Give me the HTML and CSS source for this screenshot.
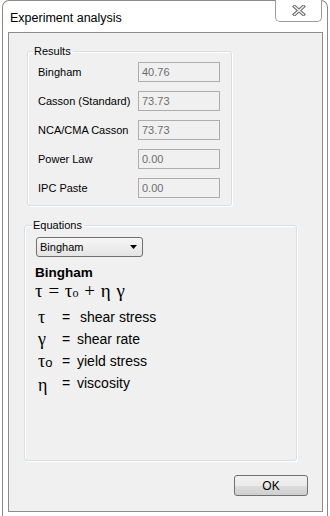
FILE: index.html
```html
<!DOCTYPE html>
<html lang="en">
<head>
    <meta charset="UTF-8">
    <meta name="viewport" content="width=device-width, initial-scale=1.0">
    <title>Experiment analysis</title>
    <link rel="stylesheet" href="styles.css">
</head>
<body>
    <div class="window">
        <div class="titlebar">
            <span class="title">Experiment analysis</span>
            <button class="close-btn" type="button" aria-label="Close">
                <svg width="14" height="11" viewBox="0 0 14 11">
                    <path d="M2.5 1.5 L11.5 9.5 M11.5 1.5 L2.5 9.5" stroke="#6b6b6b" stroke-width="3.4" stroke-linecap="square"/>
                    <path d="M2.5 1.5 L11.5 9.5 M11.5 1.5 L2.5 9.5" stroke="#f4f4f4" stroke-width="1.4" stroke-linecap="square"/>
                </svg>
            </button>
        </div>

        <div class="client">
            <fieldset class="group results">
                <legend>Results</legend>
                <div class="result-grid">
                    <label>Bingham</label>
                    <input type="text" value="40.76" readonly>
                    <label>Casson (Standard)</label>
                    <input type="text" value="73.73" readonly>
                    <label>NCA/CMA Casson</label>
                    <input type="text" value="73.73" readonly>
                    <label>Power Law</label>
                    <input type="text" value="0.00" readonly>
                    <label>IPC Paste</label>
                    <input type="text" value="0.00" readonly>
                </div>
            </fieldset>

            <fieldset class="group equations">
                <legend>Equations</legend>
                <div class="combo">
                    <span>Bingham</span>
                    <svg width="8" height="5" viewBox="0 0 8 5"><path d="M0 0 H7 L3.5 4 Z" fill="#000"/></svg>
                </div>
                <div class="eq-name">Bingham</div>
                <div class="formula">τ = τ<sub>o</sub> + η γ</div>
                <div class="defs">
                    <span class="sym">τ</span><span class="eq">=</span><span class="desc first">shear stress</span>
                    <span class="sym">γ</span><span class="eq">=</span><span class="desc">shear rate</span>
                    <span class="sym">τ<small>o</small></span><span class="eq">=</span><span class="desc">yield stress</span>
                    <span class="sym low">η</span><span class="eq">=</span><span class="desc">viscosity</span>
                </div>
            </fieldset>

            <button class="ok-btn" type="button">OK</button>
        </div>
    </div>
</body>
</html>
```

FILE: styles.css
```css
* {
    margin: 0;
    padding: 0;
    box-sizing: border-box;
}

body {
    font-family: 'Liberation Sans', Arial, sans-serif;
    background: #fff;
    width: 330px;
    height: 516px;
    overflow: hidden;
}

.window {
    width: 326px;
    height: 516px;
    margin-left: 2px;
    background: #fff;
    border: 1px solid #8a8a8a;
    border-bottom: none;
    border-radius: 7px 7px 0 0;
    padding: 0 4px 0 5px;
}

.titlebar {
    height: 31px;
    display: flex;
    justify-content: space-between;
    align-items: flex-start;
}

.title {
    font-size: 12.5px;
    color: #000;
    margin: 10px 0 0 2px;
}

.close-btn {
    width: 47px;
    height: 22px;
    margin: -1px 1px 0 0;
    background: #fff;
    border: 1px solid #9a9a9a;
    border-top: none;
    border-radius: 0 0 5px 5px;
    display: flex;
    align-items: center;
    justify-content: center;
}

.client {
    height: 480px;
    background: #f0f0f0;
    border: 1px solid #8d8d8d;
    display: flex;
    flex-direction: column;
}

.group {
    border: 1px solid #d5dfe5;
    border-radius: 3px;
    box-shadow: inset 1px 1px 0 #fff, 1px 1px 0 #fff;
}

.group legend {
    font-size: 11px;
    line-height: 14px;
    padding: 0 2px 0 1px;
    color: #000;
}

.results {
    width: 205px;
    margin: 11px 0 0 18px;
    padding: 4px 10px 7px 10px;
}

.results legend {
    margin-left: -5px;
}

.result-grid {
    display: grid;
    grid-template-columns: 100px 82px;
    row-gap: 9px;
    align-items: center;
}

.result-grid label {
    font-size: 11px;
    color: #000;
}

.result-grid input {
    width: 82px;
    height: 20px;
    border: 1px solid #adadad;
    background: #f0f0f0;
    font-family: 'Liberation Sans', Arial, sans-serif;
    font-size: 11px;
    color: #6d6d6d;
    padding: 0 3px;
    outline: none;
}

.equations {
    width: 273px;
    height: 243px;
    margin: 12px 0 0 15px;
    padding: 5px 10px 0 11px;
}

.equations legend {
    margin-left: -4px;
}

.combo {
    width: 107px;
    height: 20px;
    border: 1px solid #707070;
    border-radius: 3px;
    background: linear-gradient(#f6f6f6, #e4e4e4);
    display: flex;
    align-items: center;
    justify-content: space-between;
    padding: 0 4px 0 3px;
    font-size: 11px;
    color: #000;
}

.eq-name {
    font-size: 13.5px;
    font-weight: bold;
    line-height: 16px;
    margin: 8px 0 0 -1px;
}

.formula {
    font-family: 'Liberation Serif', 'DejaVu Serif', serif;
    font-size: 19px;
    line-height: 20px;
    margin-left: -1px;
    word-spacing: 1px;
}

.formula sub {
    font-size: 12px;
    vertical-align: 0;
}

.defs {
    display: grid;
    grid-template-columns: 24px 15px auto;
    grid-auto-rows: 22px;
    align-items: center;
    margin: 3px 0 0 2px;
    font-size: 14px;
}

.sym {
    font-family: 'Liberation Serif', 'DejaVu Serif', serif;
    font-size: 18px;
}

.sym small {
    font-family: 'Liberation Sans', Arial, sans-serif;
    font-size: 13px;
}

.sym.low {
    position: relative;
    top: 2px;
}

.desc.first {
    padding-left: 3px;
}

.ok-btn {
    align-self: flex-end;
    width: 74px;
    height: 21px;
    margin: 14px 14px 0 0;
    border: 1px solid #707070;
    border-radius: 3px;
    background: linear-gradient(#f2f2f2 0%, #ebebeb 50%, #dddddd 51%, #cfcfcf 100%);
    font-family: 'Liberation Sans', Arial, sans-serif;
    font-size: 12px;
    color: #000;
}
```
